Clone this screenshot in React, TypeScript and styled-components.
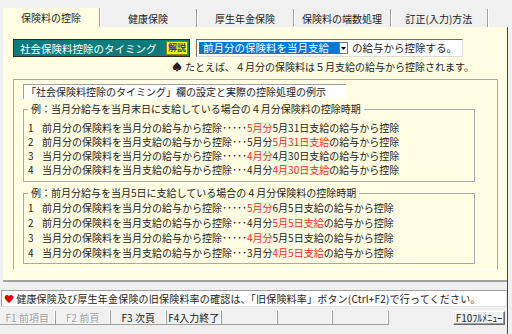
import React from "react";
import styled, { createGlobalStyle } from "styled-components";

const Global = createGlobalStyle`
  html, body { margin: 0; padding: 0; background: #f0f0f0; }
  body { font-family: "Noto Sans CJK JP", "Noto Sans", sans-serif; color: #222222; }
  * { box-sizing: border-box; }
`;

const Window = styled.div`
  width: 512px;
  height: 334px;
  overflow: hidden;
  background: #f0f0f0;
  display: flex;
  flex-direction: column;
  font-size: 10px;
`;

const TabBar = styled.div`
  display: flex;
  height: 27px;
  padding: 8px 0 0 3px;
  flex: none;
`;

const Tab = styled.div<{ $active?: boolean }>`
  width: 97px;
  display: flex;
  align-items: center;
  justify-content: center;
  background: ${(p) => (p.$active ? "#fffee3" : "transparent")};
  margin-top: ${(p) => (p.$active ? 0 : 1)}px;
  border-right: 1px solid #a0a0a0;
  box-shadow: 1px 0 0 #ffffff;
  font-size: 10px;
  line-height: 12px;
  padding-top: 1px;
  white-space: nowrap;
`;

const Body = styled.div`
  width: 508px;
  flex: 1;
  border-right: 1px solid #4a4a4a;
  display: flex;
  flex-direction: column;
`;

const Panel = styled.div`
  margin-left: 3px;
  height: 255px;
  flex: none;
  background: #fffee3;
  border-bottom: 2px solid #a0a0a0;
  padding: 12px 0 0 10px;
  display: flex;
  flex-direction: column;
`;

const TitleRow = styled.div`
  display: flex;
  height: 18px;
  gap: 6px;
  align-items: stretch;
`;

const TitleLabel = styled.div`
  width: 177px;
  background: #0b7b7b;
  border: 1px solid #2a2a2a;
  color: #ffffff;
  font-size: 10.5px;
  display: flex;
  align-items: center;
  justify-content: space-between;
  padding: 0 1px 0 6px;
  white-space: nowrap;
`;

const Badge = styled.span`
  width: 22px;
  height: 14px;
  background: #ffff00;
  color: #3030c8;
  border: 1px solid #8a8a00;
  font-size: 9px;
  font-weight: bold;
  display: flex;
  align-items: center;
  justify-content: center;
  line-height: 12px;
`;

const Combo = styled.div`
  width: 267px;
  background: #ffffff;
  border: 1px solid;
  border-color: #6e6e6e #dcdcdc #dcdcdc #6e6e6e;
  display: flex;
  align-items: center;
  padding: 0 2px;
  font-size: 10.5px;
  white-space: nowrap;
`;

const Selected = styled.span`
  width: 140px;
  height: 12px;
  background: #0078d7;
  color: #ffffff;
  padding-left: 4px;
  line-height: 12px;
`;

const Arrow = styled.span`
  width: 9px;
  height: 12px;
  border: 1px solid #7a7a7a;
  background: #ffffff;
  display: flex;
  align-items: center;
  justify-content: center;
`;

const After = styled.span`
  margin-left: 4px;
  line-height: 14px;
`;

const ExampleLine = styled.div`
  margin: 3px 0 0 159px;
  height: 14px;
  line-height: 14px;
  white-space: nowrap;
`;

const Spade = styled.span`
  margin-right: 3px;
`;

const OuterBox = styled.div`
  margin-top: 5px;
  width: 485px;
  height: 191px;
  border: 1px solid #a8a8a8;
  border-bottom-color: #ffffff;
  padding: 4px 0 0 9px;
  display: flex;
  flex-direction: column;
`;

const Caption = styled.div`
  width: 323px;
  height: 15px;
  background: #ffffff;
  border-top: 1px solid #a0a0a0;
  border-left: 1px solid #a0a0a0;
  padding-left: 2px;
  line-height: 14px;
  white-space: nowrap;
`;

const Group = styled.fieldset<{ $top: number; $pt: number; $pb: number }>`
  margin: ${(p) => p.$top}px 0 0 0;
  width: 452px;
  padding: ${(p) => p.$pt}px 4px ${(p) => p.$pb}px 4px;
  border: 1px solid #a8a8a8;
  min-width: 0;
`;

const Legend = styled.legend`
  padding: 0 3px;
  line-height: 14px;
  height: 14px;
  font-size: 10px;
  white-space: nowrap;
`;

const Row = styled.div<{ $h: number }>`
  display: flex;
  height: ${(p) => p.$h}px;
  line-height: ${(p) => p.$h}px;
  white-space: nowrap;
`;

const Num = styled.span`
  width: 14px;
  flex: none;
`;

const Seg = styled.span<{ $red?: boolean }>`
  color: ${(p) => (p.$red ? "#ff1e1e" : "#222222")};
`;

const Status = styled.div`
  margin: 8px 0 0 1px;
  height: 17px;
  flex: none;
  background: #ffffff;
  border: 1px solid;
  border-color: #a0a0a0 #e3e3e3 #e3e3e3 #a0a0a0;
  display: flex;
  align-items: center;
  padding-left: 2px;
  white-space: nowrap;
  line-height: 14px;
  letter-spacing: 0.2px;
`;

const Heart = styled.span`
  color: #e00000;
  margin-right: 2px;
`;

const FKeys = styled.div`
  margin-top: 4px;
  height: 14px;
  flex: none;
  display: flex;
`;

const FKey = styled.div<{ $disabled?: boolean }>`
  width: 55.5px;
  flex: none;
  border-right: 1px solid #a0a0a0;
  border-bottom: 1px solid #a0a0a0;
  box-shadow: inset -1px 0 0 #ffffff;
  display: flex;
  align-items: center;
  justify-content: center;
  font-size: 10px;
  line-height: 12px;
  white-space: nowrap;
  color: ${(p) => (p.$disabled ? "#a0a0a0" : "#222222")};
  text-shadow: ${(p) => (p.$disabled ? "1px 1px 0 #ffffff" : "none")};
`;

const F10 = styled.div`
  margin-left: auto;
  margin-right: 2px;
  width: 52px;
  border: 1px solid;
  border-color: #ffffff #696969 #696969 #ffffff;
  box-shadow: inset -1px -1px 0 #a0a0a0;
  display: flex;
  align-items: center;
  justify-content: center;
  font-size: 10px;
  line-height: 12px;
  white-space: nowrap;
`;

type SegT = [string, boolean?];

const group1: SegT[][] = [
  [["前月分の保険料を当月分の給与から控除･････"], ["5月分", true], ["5月31日支給の給与から控除"]],
  [["前月分の保険料を当月支給の給与から控除･･･5月分"], ["5月31日支給", true], ["の給与から控除"]],
  [["当月分の保険料を当月分の給与から控除･････"], ["4月分", true], ["4月30日支給の給与から控除"]],
  [["当月分の保険料を当月支給の給与から控除･･･4月分"], ["4月30日支給", true], ["の給与から控除"]],
];

const group2: SegT[][] = [
  [["前月分の保険料を当月分の給与から控除･････"], ["5月分", true], ["6月5日支給の給与から控除"]],
  [["前月分の保険料を当月支給の給与から控除･･･4月分"], ["5月5日支給", true], ["の給与から控除"]],
  [["当月分の保険料を当月分の給与から控除･････"], ["4月分", true], ["5月5日支給の給与から控除"]],
  [["当月分の保険料を当月支給の給与から控除･･･3月分"], ["4月5日支給", true], ["の給与から控除"]],
];

const tabs = ["保険料の控除", "健康保険", "厚生年金保険", "保険料の端数処理", "訂正(入力)方法"];

const Rows: React.FC<{ rows: SegT[][]; h: number }> = ({ rows, h }) => (
  <>
    {rows.map((segs, i) => (
      <Row key={i} $h={h}>
        <Num>{i + 1}</Num>
        {segs.map(([t, red], j) => (
          <Seg key={j} $red={red}>
            {t}
          </Seg>
        ))}
      </Row>
    ))}
  </>
);

export default function App() {
  return (
    <Window>
      <Global />
      <TabBar>
        {tabs.map((t, i) => (
          <Tab key={t} $active={i === 0}>
            {t}
          </Tab>
        ))}
      </TabBar>
      <Body>
        <Panel>
          <TitleRow>
            <TitleLabel>
              社会保険料控除のタイミング
              <Badge>解説</Badge>
            </TitleLabel>
            <Combo>
              <Selected>前月分の保険料を当月支給</Selected>
              <Arrow>
                <svg width="5" height="3" viewBox="0 0 5 3">
                  <path d="M0 0h5L2.5 3z" fill="#000" />
                </svg>
              </Arrow>
              <After>の給与から控除する。</After>
            </Combo>
          </TitleRow>
          <ExampleLine>
            <Spade>♠</Spade>たとえば、４月分の保険料は５月支給の給与から控除されます。
          </ExampleLine>
          <OuterBox>
            <Caption>「社会保険料控除のタイミング」欄の設定と実際の控除処理の例示</Caption>
            <Group $top={3} $pt={5} $pb={4}>
              <Legend>例：当月分給与を当月末日に支給している場合の４月分保険料の控除時期</Legend>
              <Rows rows={group1} h={14} />
            </Group>
            <Group $top={4} $pt={0} $pb={3}>
              <Legend>例：前月分給与を当月5日に支給している場合の４月分保険料の控除時期</Legend>
              <Rows rows={group2} h={15} />
            </Group>
          </OuterBox>
        </Panel>
        <Status>
          <Heart>♥</Heart>
          健康保険及び厚生年金保険の旧保険料率の確認は、「旧保険料率」ボタン(Ctrl+F2)で行ってください。
        </Status>
        <FKeys>
          <FKey $disabled>F1 前項目</FKey>
          <FKey $disabled>F2 前頁</FKey>
          <FKey>F3 次頁</FKey>
          <FKey>F4入力終了</FKey>
          <FKey />
          <FKey />
          <FKey />
          <F10>F10ﾌﾙﾒﾆｭｰ</F10>
        </FKeys>
      </Body>
    </Window>
  );
}
